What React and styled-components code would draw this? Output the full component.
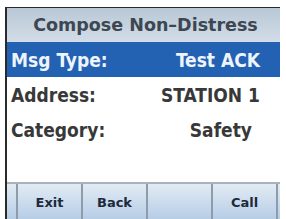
import React from 'react';
import styled, { createGlobalStyle } from 'styled-components';

const GlobalStyle = createGlobalStyle`
  body {
    margin: 0;
    background: #ffffff;
    font-family: "DejaVu Sans", Verdana, sans-serif;
  }
`;

const rows = [
  { label: 'Msg Type:', value: 'Test ACK', selected: true },
  { label: 'Address:', value: 'STATION 1' },
  { label: 'Category:', value: 'Safety', pad: 28 },
];

const keys = ['Exit', 'Back', '', 'Call'];

function App() {
  return (
    <>
      <GlobalStyle />
      <Page>
        <Screen>
          <TitleBar>Compose Non–Distress</TitleBar>
          {rows.map((r) => (
            <Row key={r.label} $selected={r.selected}>
              <Label>{r.label}</Label>
              <Value $pad={r.pad}>{r.value}</Value>
            </Row>
          ))}
          <Row />
          <SoftKeys>
            <Edge />
            {keys.map((k, i) => (
              <SoftKey key={i}>{k}</SoftKey>
            ))}
          </SoftKeys>
        </Screen>
      </Page>
    </>
  );
}

const Page = styled.div`
  width: 286px;
  height: 219px;
  padding: 7px 0 0 5px;
  box-sizing: border-box;
  overflow: hidden;
`;

const Screen = styled.div`
  width: 273px;
  border-left: 2px solid #2a2a2a;
  border-top: 1px solid #2a2a2a;
  background: #ffffff;
  display: flex;
  flex-direction: column;
`;

const TitleBar = styled.div`
  height: 34px;
  display: flex;
  align-items: center;
  justify-content: center;
  background: linear-gradient(#b9c8d6, #d2dde8);
  color: #3d4752;
  font-weight: bold;
  font-size: 17.5px;
  padding-left: 4px;
`;

const Row = styled.div`
  height: 35px;
  display: flex;
  align-items: center;
  justify-content: space-between;
  padding: 0 0 0 4px;
  background: ${(p) => (p.$selected ? '#2361b3' : 'transparent')};
  color: ${(p) => (p.$selected ? '#eef4fc' : '#383838')};
  font-family: "DejaVu Sans Condensed", "DejaVu Sans", sans-serif;
  font-stretch: condensed;
  font-weight: bold;
  font-size: 19px;
`;

const Label = styled.span``;

const Value = styled.span`
  padding-right: ${(p) => p.$pad || 20}px;
`;

const SoftKeys = styled.div`
  height: 36px;
  display: flex;
  border-top: 2px solid #a9b3bc;
  background: linear-gradient(#e2ebf4, #b5cce6);
`;

const Edge = styled.div`
  width: 9px;
  border-right: 2px solid #8d9cab;
`;

const SoftKey = styled.div`
  width: 63px;
  border-right: 2px solid #8d9cab;
  display: flex;
  align-items: center;
  justify-content: center;
  color: #1e2a3a;
  font-weight: bold;
  font-size: 13px;
`;

export default App;
